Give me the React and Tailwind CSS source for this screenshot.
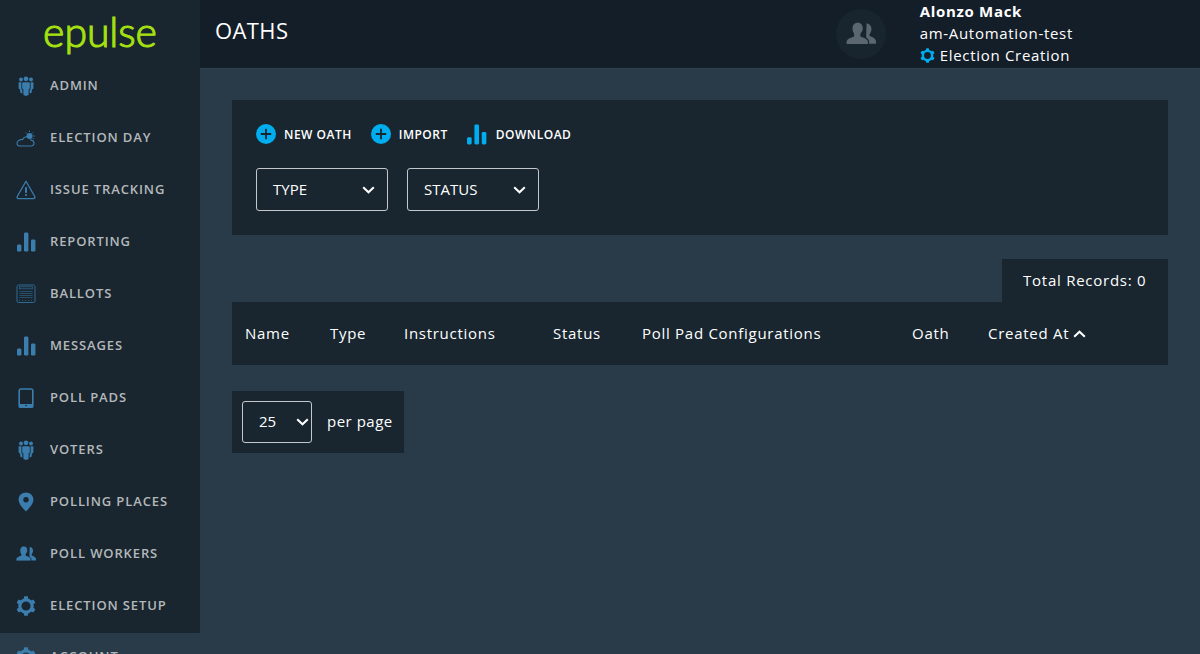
import React from "react";

const C = "#3b7dad";
const I = ({ children, w = 20, h = 20, vb = "0 0 20 20", className = "" }) => (
  <svg width={w} height={h} viewBox={vb} className={className}>{children}</svg>
);

const Crowd = () => (
  <I>
    <g fill={C}>
      <circle cx="10" cy="2.800" r="2.400" />
      <circle cx="5" cy="3.400" r="2" />
      <circle cx="15" cy="3.400" r="2" />
      <path d="M7.200 6.300h5.600a1 1 0 0 1 1 1v5.200l-1.200 1V19l-2.600 1-2.600-1v-5.500l-1.200-1V7.300a1 1 0 0 1 1-1z" />
      <path d="M2.600 6.200h2.800v6.800l1 .9v3.500l-2-.6-.3-3-1.500-1.400z" />
      <path d="M17.400 6.200h-2.800v6.800l-1 .9v3.500l2-.6.300-3 1.500-1.400z" />
    </g>
  </I>
);
const Cloud = () => (
  <I>
    <path d="M4.500 18h10.300c2 0 3.200-1.400 3.200-2.900 0-1.600-1.200-2.800-2.900-2.900-.5-2.200-2.300-3.500-4.300-3.500-1.800 0-3.300 1-4 2.700C3.800 11.500 1 13 1 15.200 1 16.800 2.500 18 4.500 18z" fill="none" stroke={C} strokeWidth="1.100" />
    <circle cx="13.500" cy="8" r="3" fill={C} />
    <g stroke={C} strokeWidth="0.900">
      <path d="M13.500 2.500v1.500M17 4.500l-1 1M18.800 8h-1.600M9.800 4.500l1 1M18 11l-1.200-.7" />
    </g>
  </I>
);
const Warn = () => (
  <I>
    <path d="M10 1.200 18.800 16.500a1.400 1.400 0 0 1-1.200 2.100H2.400a1.400 1.400 0 0 1-1.200-2.100z" fill="none" stroke={C} strokeWidth="1.300" strokeLinejoin="round" />
    <rect x="9" y="7" width="2" height="6" rx="0.800" fill={C} />
    <circle cx="10" cy="15" r="1.100" fill={C} />
  </I>
);
const Bars = ({ color = C, w = 20, h = 20 }) => (
  <I w={w} h={h}>
    <rect x="1" y="12.500" width="4.400" height="7" rx="1.300" fill={color} />
    <rect x="8" y="0.500" width="4.400" height="19" rx="1.300" fill={color} />
    <rect x="15" y="7.500" width="4.400" height="12" rx="1.300" fill={color} />
  </I>
);
const Ballot = () => (
  <I>
    <rect x="1" y="1" width="18" height="17.500" rx="1.500" fill="none" stroke="#2f6a94" strokeWidth="1" />
    <rect x="3.500" y="2.800" width="13" height="2" fill="none" stroke="#2f6a94" strokeWidth="0.700" />
    <path d="M3.500 7.500h13M3.500 9.500h13M3.500 11.500h13M3.500 13.500h13" stroke="#2f6a94" strokeWidth="0.600" />
    <path d="M3 16.500h14" stroke="#2f6a94" strokeWidth="0.700" strokeDasharray="1 2" />
  </I>
);
const Tablet = () => (
  <I>
    <rect x="3.200" y="1" width="13.600" height="18.500" rx="1.800" fill="none" stroke={C} strokeWidth="1.600" />
    <rect x="3.200" y="16" width="13.600" height="3.500" fill={C} />
    <circle cx="10" cy="17.500" r="0.800" fill="#19262f" />
  </I>
);
const Pin = () => (
  <I>
    <path fillRule="evenodd" d="M10 .5c4.200 0 7.400 3.100 7.400 7.100 0 4.500-4 8.400-7.400 11.900C6.600 16 2.600 12.100 2.600 7.600 2.600 3.600 5.800.5 10 .5zm0 4.500a2.700 2.700 0 1 0 0 5.400 2.700 2.700 0 0 0 0-5.400z" fill={C} />
  </I>
);
const Users = ({ color = C, bg = "#19262f", w = 20, h = 20 }) => (
  <I w={w} h={h}>
    <path d="M13.700 3c2 0 3.300 1.700 3.300 3.700 0 1.500-.6 2.600-1.300 3.400v1.300c1.700.6 3.800 1.500 4.300 3.200v1.900h-6.700z" fill={color} />
    <path d="M7.800 2c2.300 0 3.800 1.900 3.800 4.200 0 1.700-.7 2.900-1.600 3.800v1.400c2.200.6 4.500 1.500 5 3.400v2.200H0v-2.200c.5-1.900 2.800-2.800 5-3.400V10c-.9-.9-1.100-2.100-1.100-3.800C3.900 3.900 5.500 2 7.800 2z" fill={color} stroke={bg} strokeWidth="0.800" />
  </I>
);
const Gear = ({ color = C, w = 20, h = 20 }) => (
  <I w={w} h={h}>
    <circle cx="10" cy="10" r="6.200" fill="none" stroke={color} strokeWidth="3.200" />
    <g fill={color}>
      <rect x="8" y="0.300" width="4" height="3.500" rx="0.600" />
      <rect x="8" y="16.200" width="4" height="3.500" rx="0.600" />
      <rect x="8" y="0.300" width="4" height="3.500" rx="0.600" transform="rotate(60 10 10)" />
      <rect x="8" y="0.300" width="4" height="3.500" rx="0.600" transform="rotate(120 10 10)" />
      <rect x="8" y="0.300" width="4" height="3.500" rx="0.600" transform="rotate(240 10 10)" />
      <rect x="8" y="0.300" width="4" height="3.500" rx="0.600" transform="rotate(300 10 10)" />
    </g>
  </I>
);
const Plus = () => (
  <svg width="20" height="20" viewBox="0 0 20 20">
    <circle cx="10" cy="10" r="10" fill="#00aeef" />
    <path d="M10 4.800v10.400M4.800 10h10.400" stroke="#19262f" strokeWidth="1.800" />
  </svg>
);
const Chevron = ({ up = false, w = 13, h = 8 }) => (
  <svg width={w} height={h} viewBox="0 0 13 8">
    <path d={up ? "M1.200 6.800 6.500 1.700l5.300 5.100" : "M1.200 1.200 6.500 6.300l5.300-5.100"} fill="none" stroke="#fff" strokeWidth="2" />
  </svg>
);

const nav = [
  ["ADMIN", <Crowd />],
  ["ELECTION DAY", <Cloud />],
  ["ISSUE TRACKING", <Warn />],
  ["REPORTING", <Bars />],
  ["BALLOTS", <Ballot />],
  ["MESSAGES", <Bars />],
  ["POLL PADS", <Tablet />],
  ["VOTERS", <Crowd />],
  ["POLLING PLACES", <Pin />],
  ["POLL WORKERS", <Users />],
  ["ELECTION SETUP", <Gear />],
];

const NavItem = ({ label, icon, active }) => (
  <div className={`flex h-[52px] items-center pl-4 shrink-0 ${active ? "mt-px bg-[#293a49] pb-1" : ""}`}>
    <span className="w-[34px] flex shrink-0">{icon}</span>
    <span className="text-[13px] font-semibold tracking-[0.88px] text-[#b4b8bb]">{label}</span>
  </div>
);

const Select = ({ label, className = "" }) => (
  <div className={`flex h-[43px] w-[132px] items-center justify-between rounded-[3px] border border-[#c4c8cb] pl-4 pr-3 text-[15px] text-white ${className}`}>
    <span>{label}</span>
    <Chevron />
  </div>
);

const Action = ({ icon, label, className = "", gap = "ml-2" }) => (
  <div className={`flex items-center ${className}`}>
    {icon}
    <span className={`${gap} mt-px text-xs font-semibold tracking-[0.5px] text-white`}>{label}</span>
  </div>
);

const cols = [
  ["Name", "w-[85px]"],
  ["Type", "w-[74px]"],
  ["Instructions", "w-[149px]"],
  ["Status", "w-[89px]"],
  ["Poll Pad Configurations", "w-[270px]"],
  ["Oath", "w-[76px]"],
];

export default function App() {
  return (
    <div className="flex h-[654px] w-[1200px] overflow-hidden bg-[#293a49] font-['Open_Sans',sans-serif]">
      <aside className="flex w-[200px] shrink-0 flex-col overflow-hidden bg-[#19262f]">
        <div className="flex h-[60px] shrink-0 items-start justify-center pt-[8px]">
          <span className="font-['Lato',sans-serif] text-[41px] font-light leading-[48px] tracking-[-0.1px] text-[#a5e010] [-webkit-text-stroke:1.1px_#a5e010]">epulse</span>
        </div>
        {nav.map(([l, i]) => (
          <NavItem key={l} label={l} icon={i} />
        ))}
        <NavItem label="ACCOUNT" icon={<Gear />} active />
      </aside>
      <div className="flex min-w-0 flex-1 flex-col">
        <header className="flex h-[69px] shrink-0 items-start border-b border-[#2f4250] bg-[#141e29]">
          <h1 className="ml-[15px] mt-[15px] text-[22px] leading-[30px] tracking-[0.4px] text-white">OATHS</h1>
          <div className="ml-auto mr-[127px] flex">
            <div className="mt-[9px] flex h-[50px] w-[50px] items-center justify-center rounded-full bg-[#18252e]">
              <Users color="#5b6670" bg="#18252e" w={30} h={30} />
            </div>
            <div className="ml-[34px] text-[15px] leading-[22px] tracking-[0.7px] text-white">
              <div className="font-bold">Alonzo Mack</div>
              <div>am-Automation-test</div>
              <div className="flex items-center">
                <Gear color="#00aeef" w={15} h={15} />
                <span className="ml-[5px]">Election Creation</span>
              </div>
            </div>
          </div>
        </header>
        <main className="flex flex-1 flex-col px-8 pt-[31px]">
          <section className="h-[135px] bg-[#19262f] pl-6 pt-6">
            <div className="flex h-5 items-center">
              <Action icon={<Plus />} label="NEW OATH" />
              <Action icon={<Plus />} label="IMPORT" className="ml-[19px]" />
              <Action icon={<Bars color="#00aeef" w={21} h={21} />} label="DOWNLOAD" className="ml-[18px]" gap="ml-[9px]" />
            </div>
            <div className="mt-6 flex gap-[19px]">
              <Select label="TYPE" />
              <Select label="STATUS" />
            </div>
          </section>
          <div className="mt-6 flex h-[43px] w-[166px] items-center self-end bg-[#19262f] pl-[21px] text-[15px] tracking-[0.75px] text-white">
            Total Records: 0
          </div>
          <div className="flex h-[63px] items-center bg-[#19262f] pl-[13px] text-[15px] font-medium tracking-[0.72px] text-white">
            {cols.map(([l, w]) => (
              <div key={l} className={w}>{l}</div>
            ))}
            <div className="flex items-center">
              Created At
              <span className="ml-[4px] flex"><Chevron up /></span>
            </div>
          </div>
          <div className="mt-[26px] flex h-[62px] w-[172px] items-center bg-[#19262f] pl-[10px] text-white">
            <div className="flex h-[42px] w-[70px] items-center justify-between rounded-[3px] border border-[#c4c8cb] pl-4 pr-[2px] text-[15px]">
              <span className="-mt-px">25</span>
              <Chevron />
            </div>
            <span className="-mt-[2px] ml-[15px] text-[15px] tracking-[0.5px]">per page</span>
          </div>
        </main>
      </div>
    </div>
  );
}
